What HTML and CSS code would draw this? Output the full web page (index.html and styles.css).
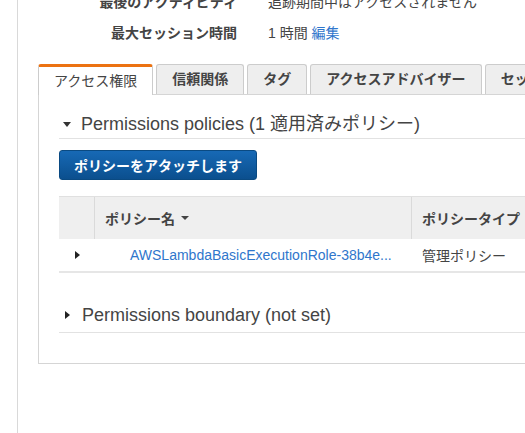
FILE: index.html
```html
<!DOCTYPE html>
<html lang="ja">
<head>
<meta charset="utf-8">
<link rel="stylesheet" href="styles.css">
</head>
<body>
<div class="page">
  <div class="summary">
    <div class="label">最後のアクティビティ</div>
    <div class="value">追跡期間中はアクセスされません</div>
    <div class="label">最大セッション時間</div>
    <div class="value">1 時間 <a class="link">編集</a></div>
  </div>

  <div class="tabs">
    <div class="tab active">アクセス権限</div>
    <div class="tab">信頼関係</div>
    <div class="tab">タグ</div>
    <div class="tab">アクセスアドバイザー</div>
    <div class="tab">セッションの無効化</div>
  </div>

  <div class="panel">
    <div class="section-title">
      <span class="caret-down"></span>Permissions policies (1 適用済みポリシー)
    </div>
    <button class="btn">ポリシーをアタッチします</button>

    <div class="table">
      <div class="thead">
        <div class="cell c1"></div>
        <div class="cell c2 th">ポリシー名 <span class="sort"></span></div>
        <div class="cell c3 th">ポリシータイプ</div>
      </div>
      <div class="trow">
        <div class="cell c1"><span class="caret-right"></span></div>
        <div class="cell c2"><a class="link name">AWSLambdaBasicExecutionRole-38b4e...</a></div>
        <div class="cell c3">管理ポリシー</div>
      </div>
    </div>

    <div class="section-title boundary">
      <span class="caret-right big"></span>Permissions boundary (not set)
    </div>
  </div>
</div>
</body>
</html>
```

FILE: styles.css
```css
html, body {
  margin: 0;
  padding: 0;
  background: #fff;
  overflow: hidden;
}
body {
  font-family: "Liberation Sans", "Noto Sans CJK JP", sans-serif;
  color: #444;
  font-size: 14px;
}
.page {
  margin-left: 17px;
  border-left: 1px solid #d9d9d9;
  min-height: 433px;
  padding-left: 20px;
  overflow: hidden;
}
.summary {
  display: grid;
  grid-template-columns: 199px auto;
  column-gap: 31px;
  margin-top: -13px;
  line-height: 31px;
  white-space: nowrap;
}
.summary .label {
  text-align: right;
  font-weight: bold;
}
.link {
  color: #2f76cc;
  text-decoration: none;
}
.tabs {
  display: flex;
  gap: 3px;
  margin-top: 15px;
  align-items: flex-end;
  white-space: nowrap;
}
.tab {
  flex: none;
  height: 29px;
  line-height: 29px;
  padding: 0 15px;
  border: 1px solid #ccc;
  border-bottom: none;
  border-radius: 3px 3px 0 0;
  background: #eeeeee;
  font-size: 14px;
  font-weight: bold;
  color: #444;
}
.tab.active {
  background: #fff;
  height: 28px;
  line-height: 28px;
  border-top: 3px solid #ec7211;
  font-weight: normal;
  margin-bottom: -1px;
  position: relative;
  z-index: 1;
}
.panel {
  border: 1px solid #d5d5d5;
  border-right: none;
  width: 600px;
  padding: 0 0 30px 20px;
}
.section-title {
  font-size: 18px;
  color: #444;
  line-height: 20px;
  padding: 19px 0 4px;
  border-bottom: 1px solid #e2e2e2;
  display: flex;
  align-items: center;
  white-space: nowrap;
}
.caret-down {
  display: inline-block;
  width: 0;
  height: 0;
  border-left: 4px solid transparent;
  border-right: 4px solid transparent;
  border-top: 5px solid #333;
  margin: 0 10px 0 4px;
}
.caret-right {
  display: inline-block;
  width: 0;
  height: 0;
  border-top: 4px solid transparent;
  border-bottom: 4px solid transparent;
  border-left: 5px solid #222;
}
.caret-right.big {
  margin: 0 12px 0 6px;
}
.btn {
  display: block;
  margin-top: 11px;
  height: 30px;
  padding: 0 14px;
  border: 1px solid #0a4a82;
  border-radius: 3px;
  background: linear-gradient(#1769b5, #0b4f8e);
  color: #fff;
  font-family: inherit;
  font-size: 14px;
  font-weight: bold;
  white-space: nowrap;
  text-align: center;
}
.table {
  margin-top: 16px;
  border-bottom: 2px solid #e6e6e6;
}
.thead, .trow {
  display: grid;
  grid-template-columns: 35px 317px 1fr;
}
.thead {
  background: #efefef;
  height: 42px;
  border-top: 1px solid #e0e0e0;
}
.thead .cell {
  display: flex;
  align-items: center;
  padding-left: 10px;
}
.thead .c1 {
  padding-left: 0;
}
.thead .c2, .thead .c3 {
  border-left: 1px solid #dadada;
}
.th {
  font-size: 14px;
  font-weight: bold;
  color: #444;
  white-space: nowrap;
}
.sort {
  display: inline-block;
  width: 0;
  height: 0;
  border-left: 4px solid transparent;
  border-right: 4px solid transparent;
  border-top: 4px solid #444;
  margin-left: 6px;
}
.trow {
  height: 32px;
  align-items: center;
  font-size: 14px;
  white-space: nowrap;
}
.trow .c1 {
  display: flex;
  justify-content: center;
  padding-left: 2px;
}
.trow .c2 {
  padding-left: 36px;
}
.trow .c3 {
  padding-left: 11px;
}
.section-title.boundary {
  padding: 32px 0 7px;
}
```
